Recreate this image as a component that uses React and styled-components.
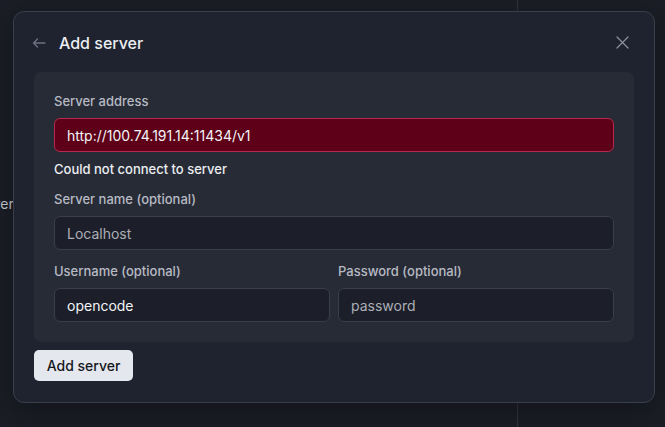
import React from "react";
import styled, { createGlobalStyle } from "styled-components";

const Global = createGlobalStyle`
  html, body { margin: 0; padding: 0; background: #1b1e26; }
  body { font-family: Inter, "Noto Sans", sans-serif; -webkit-font-smoothing: antialiased; }
  * { box-sizing: border-box; }
`;

const Page = styled.div`
  position: relative;
  width: 665px;
  height: 427px;
  overflow: hidden;
  display: flex;
  background: #1b1e26;
`;

const MainArea = styled.div`
  width: 518px;
  border-right: 1px solid #30343f;
  display: flex;
  flex-direction: column;
  padding-top: 196px;
`;

const SideText = styled.div`
  margin-left: -30px;
  font-size: 14px;
  line-height: 16px;
  color: #c9ccd3;
`;

const Dialog = styled.div`
  position: absolute;
  top: 11px;
  left: 13px;
  width: 642px;
  height: 392px;
  background: #1f2330;
  border: 1px solid #3b3f4b;
  border-radius: 11px;
  padding: 0 20px 20px;
  display: flex;
  flex-direction: column;
  box-shadow: 0 8px 30px rgba(0, 0, 0, 0.35);
`;

const Header = styled.div`
  height: 60px;
  display: flex;
  align-items: center;
  padding-top: 1px;
`;

const IconButton = styled.button`
  background: none;
  border: none;
  padding: 0;
  display: flex;
  align-items: center;
  justify-content: center;
  cursor: pointer;
  color: ${(p) => p.$color};
  margin-left: ${(p) => p.$ml || "0"};
  margin-right: ${(p) => p.$mr || "0"};
`;

const Title = styled.h2`
  margin: 0 0 0 13px;
  flex: 1;
  font-size: 16px;
  font-weight: 500;
  color: #eceef2;
  line-height: 20px;
`;

const Card = styled.div`
  background: #272b36;
  border-radius: 7px;
  padding: 21px 20px 20px;
  display: flex;
  flex-direction: column;
  gap: 13px;
`;

const Row = styled.div`
  display: flex;
  gap: 8px;
`;

const Field = styled.div`
  flex: 1;
  display: flex;
  flex-direction: column;
  gap: 9px;
`;

const Label = styled.label`
  font-size: 13px;
  line-height: 16px;
  font-weight: 500;
  color: #b7bac3;
`;

const Input = styled.input`
  height: 34px;
  width: 100%;
  border-radius: 6px;
  padding: 0 12px;
  font-family: inherit;
  font-size: 14px;
  outline: none;
  color: #f2f3f6;
  background: ${(p) => (p.$error ? "#5e0017" : "#1c1f29")};
  border: 1px solid ${(p) => (p.$error ? "#b52a4e" : "#3a3e4a")};
  &::placeholder { color: #abaeb6; }
`;

const ErrorText = styled.div`
  font-size: 13px;
  line-height: 16px;
  font-weight: 500;
  color: #eceef2;
  margin-bottom: 1px;
`;

const Footer = styled.div`
  display: flex;
  margin-top: 8px;
`;

const PrimaryButton = styled.button`
  height: 31px;
  width: 99px;
  border-radius: 5px;
  border: none;
  background: #e4e7ee;
  color: #15171c;
  font-family: inherit;
  font-size: 14px;
  font-weight: 500;
  cursor: pointer;
`;

const ArrowLeft = () => (
  <svg width="14" height="12" viewBox="0 0 14 12" fill="none" stroke="currentColor" strokeWidth="1.3" strokeLinecap="round" strokeLinejoin="round">
    <path d="M13 6H1.5M5.5 2L1.5 6l4 4" />
  </svg>
);

const CloseIcon = () => (
  <svg width="13" height="13" viewBox="0 0 13 13" fill="none" stroke="currentColor" strokeWidth="1.2" strokeLinecap="round">
    <path d="M1 1l11 11M12 1L1 12" />
  </svg>
);

export default function App() {
  return (
    <>
      <Global />
      <Page>
        <MainArea>
          <SideText>Server</SideText>
        </MainArea>
        <Dialog>
          <Header>
            <IconButton $color="#6c7180" $ml="-2px"><ArrowLeft /></IconButton>
            <Title>Add server</Title>
            <IconButton $color="#8d919c" $mr="5px"><CloseIcon /></IconButton>
          </Header>
          <Card>
            <Field>
              <Label>Server address</Label>
              <Input $error defaultValue="http://100.74.191.14:11434/v1" />
              <ErrorText>Could not connect to server</ErrorText>
            </Field>
            <Field>
              <Label>Server name (optional)</Label>
              <Input placeholder="Localhost" />
            </Field>
            <Row>
              <Field>
                <Label>Username (optional)</Label>
                <Input defaultValue="opencode" />
              </Field>
              <Field>
                <Label>Password (optional)</Label>
                <Input type="text" placeholder="password" />
              </Field>
            </Row>
          </Card>
          <Footer>
            <PrimaryButton>Add server</PrimaryButton>
          </Footer>
        </Dialog>
      </Page>
    </>
  );
}
